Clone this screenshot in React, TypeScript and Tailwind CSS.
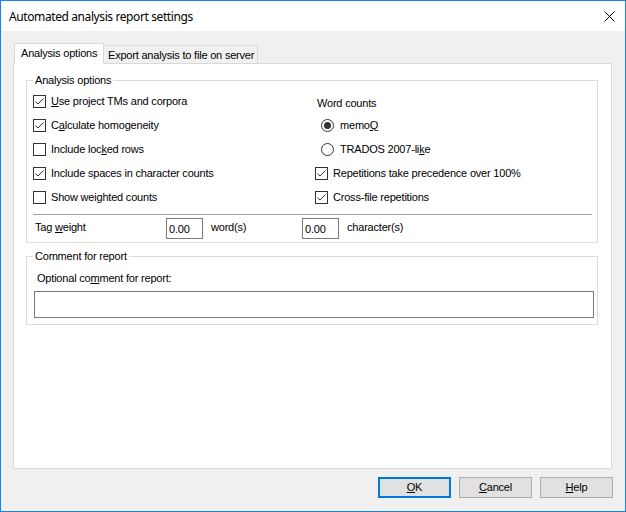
import React from "react";

const font = { fontFamily: '"Liberation Sans", Arial, sans-serif' };

function CheckBox({ checked }: { checked: boolean }) {
  return (
    <span className="w-[13px] h-[13px] border border-[#333333] bg-white shrink-0 flex items-center justify-center">
      {checked && (
        <svg width="11" height="11" viewBox="0 0 11 11">
          <polyline points="1.5,5.5 4,8 9.5,2.5" fill="none" stroke="#333333" strokeWidth="1" />
        </svg>
      )}
    </span>
  );
}

function Radio({ checked }: { checked: boolean }) {
  return (
    <span className="w-[13px] h-[13px] rounded-full border border-[#333333] bg-white shrink-0 flex items-center justify-center">
      {checked && <span className="w-[7px] h-[7px] rounded-full bg-[#333333]" />}
    </span>
  );
}

function CheckRow({ checked, children, last }: { checked: boolean; children: React.ReactNode; last?: boolean }) {
  return (
    <div className={`flex items-center gap-[5px] ${last ? "h-[25px]" : "h-[24px]"}`}>
      <CheckBox checked={checked} />
      <span>{children}</span>
    </div>
  );
}

function RadioRow({ checked, children }: { checked: boolean; children: React.ReactNode }) {
  return (
    <div className="flex items-center gap-[6px] h-[24px] pl-[6px]">
      <Radio checked={checked} />
      <span>{children}</span>
    </div>
  );
}

export default function App() {
  return (
    <div
      className="w-[626px] h-[512px] border border-[#1883d7] bg-[#f0f0f0] flex flex-col text-[11px] leading-[13px] text-black tracking-[-0.2px] overflow-hidden"
      style={font}
    >
      <div className="h-[30px] bg-white flex items-center justify-between pl-[8px] pr-[10px] shrink-0">
        <span
          className="text-[12px] tracking-[-0.4px]"
          style={{ fontFamily: '"Noto Sans", "Open Sans", sans-serif' }}
        >
          Automated analysis report settings
        </span>
        <svg width="11" height="11" viewBox="0 0 11 11">
          <line x1="0.5" y1="0.5" x2="10.5" y2="10.5" stroke="#000" strokeWidth="1" />
          <line x1="10.5" y1="0.5" x2="0.5" y2="10.5" stroke="#000" strokeWidth="1" />
        </svg>
      </div>

      <div className="flex-1 flex flex-col px-[12px] pt-[12px]">
        <div className="flex items-end ml-[1px]">
          <div className="relative z-10 h-[21px] w-[90px] bg-white border border-b-0 border-[#d9d9d9] mb-[-1px] pl-[6px] pt-[3px]">
            Analysis options
          </div>
          <div className="h-[18px] w-[154px] bg-[#f0f0f0] border-t border-r border-[#d9d9d9] pl-[4px] pt-[3px]">
            Export analysis to file on server
          </div>
        </div>

        <div className="w-[599px] h-[406px] bg-white border border-[#d9d9d9] pl-[12px] pt-[10px]">
          <fieldset className="w-[572px] border border-[#dcdcdc] pl-[6px] pr-[5px] pt-[2px] pb-[3px]">
            <legend className="px-[2px]">Analysis options</legend>
            <div className="grid grid-cols-[282px_1fr]">
              <div className="flex flex-col">
                <CheckRow checked>
                  <span className="underline">U</span>se project TMs and corpora
                </CheckRow>
                <CheckRow checked>
                  C<span className="underline">a</span>lculate homogeneity
                </CheckRow>
                <CheckRow checked={false}>
                  Include loc<span className="underline">k</span>ed rows
                </CheckRow>
                <CheckRow checked>Include spaces in character counts</CheckRow>
                <CheckRow checked={false} last>
                  Show weighted counts
                </CheckRow>
              </div>
              <div className="flex flex-col">
                <div className="h-[24px] flex items-center pl-[2px] pt-[4px]">Word counts</div>
                <RadioRow checked>
                  memo<span className="underline">Q</span>
                </RadioRow>
                <RadioRow checked={false}>
                  TRADOS 2007-li<span className="underline">k</span>e
                </RadioRow>
                <CheckRow checked>Repetitions take precedence over 100%</CheckRow>
                <CheckRow checked last>
                  Cross-file repetitions
                </CheckRow>
              </div>
            </div>
            <div className="mt-[4px] h-px bg-[#a0a0a0]" />
            <div className="mt-[3px] flex items-center">
              <span className="ml-[2px] w-[131px] pb-[3px]">
                Tag <span className="underline">w</span>eight
              </span>
              <div className="w-[37px] h-[21px] border border-[#7a7a7a] bg-white flex items-center pl-[2px] pt-[2px]">
                0.00
              </div>
              <span className="ml-[8px] w-[91px] pb-[3px]">word(s)</span>
              <div className="w-[37px] h-[21px] border border-[#7a7a7a] bg-white flex items-center pl-[2px] pt-[2px]">
                0.00
              </div>
              <span className="ml-[8px] pb-[3px]">character(s)</span>
            </div>
          </fieldset>

          <fieldset className="w-[572px] mt-[7px] border border-[#dcdcdc] pl-[7px] pr-[3px] pb-[6px]">
            <legend className="px-[2px] ml-[-1px]">Comment for report</legend>
            <div className="mt-[9px] ml-[3px]">
              Optional co<span className="underline">m</span>ment for report:
            </div>
            <div className="mt-[6px] h-[27px] border border-[#7a7a7a] bg-white" />
          </fieldset>
        </div>

        <div className="mt-[8px] flex justify-end gap-[8px]">
          <button className="w-[73px] h-[21px] border-2 border-[#0078d7] bg-[#e1e1e1] flex items-center justify-center">
            <span>
              <span className="underline">O</span>K
            </span>
          </button>
          <button className="w-[73px] h-[21px] border border-[#adadad] bg-[#e1e1e1] flex items-center justify-center">
            <span>
              <span className="underline">C</span>ancel
            </span>
          </button>
          <button className="w-[73px] h-[21px] border border-[#adadad] bg-[#e1e1e1] flex items-center justify-center">
            <span>
              <span className="underline">H</span>elp
            </span>
          </button>
        </div>
      </div>
    </div>
  );
}
